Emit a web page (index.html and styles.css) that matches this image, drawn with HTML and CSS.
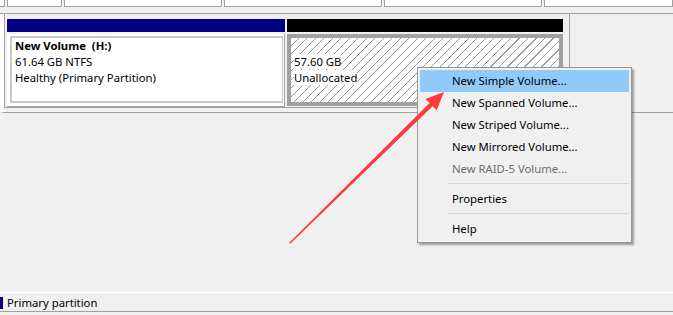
FILE: index.html
```html
<!DOCTYPE html>
<html>
<head>
<meta charset="utf-8">
<title>Disk Management</title>
<link rel="stylesheet" href="styles.css">
</head>
<body>
<div class="columns">
	<div class="col col-0"></div>
	<div class="col col-1"></div>
	<div class="col col-2"></div>
	<div class="col col-3"></div>
	<div class="col col-4"></div>
	<div class="col col-5"></div>
</div>

<div class="disk-row">
	<div class="disk">
		<div class="part part-primary">
			<div class="part-bar"></div>
			<div class="part-box">
				<div class="part-inner">
					<div class="part-name">New Volume&nbsp; (H:)</div>
					<div>61.64 GB NTFS</div>
					<div>Healthy (Primary Partition)</div>
				</div>
			</div>
		</div>
		<div class="part part-free">
			<div class="part-bar"></div>
			<div class="part-box">
				<div class="part-inner">
					<div>&nbsp;</div>
					<div><span class="label">57.60 GB</span></div>
					<div><span class="label">Unallocated</span></div>
				</div>
			</div>
		</div>
	</div>
</div>

<div class="empty"></div>

<div class="status">
	<span class="legend"></span>
	<span class="legend-text">Primary partition</span>
</div>

<div class="menu">
	<div class="item hot">New Simple Volume...</div>
	<div class="item">New Spanned Volume...</div>
	<div class="item">New Striped Volume...</div>
	<div class="item">New Mirrored Volume...</div>
	<div class="item off">New RAID-5 Volume...</div>
	<div class="sep"></div>
	<div class="item">Properties</div>
	<div class="sep"></div>
	<div class="item">Help</div>
</div>

<svg class="pointer" width="673" height="315" viewBox="0 0 673 315">
	<polygon fill="#ff3a3a" points="289,243 429.6,103 425.5,98.9 444,92 436.7,110.3 432.6,106.2 290.5,243.5"/>
</svg>
</body>
</html>
```

FILE: styles.css
```css
body {
	margin: 0;
	width: 673px;
	height: 315px;
	overflow: hidden;
	background: #f0f0f0;
	font-family: "Noto Sans", "Open Sans", sans-serif;
	font-size: 11.3px;
	color: #000;
	position: relative;
}
.columns {
	display: flex;
	height: 14px;
	border-bottom: 1px solid #a0a0a0;
	box-sizing: border-box;
}
.col {
	height: 6px;
	background: #fff;
	border-right: 1px solid #a0a0a0;
	border-bottom: 1px solid #a0a0a0;
	margin-right: 2px;
}
.col-0 { width: 4px; }
.col-1 { width: 53px; border-left: 1px solid #a0a0a0; }
.col-2 { width: 156px; border-left: 1px solid #a0a0a0; }
.col-3 { width: 156px; border-left: 1px solid #a0a0a0; }
.col-4 { width: 156px; border-left: 1px solid #a0a0a0; }
.col-5 { flex: 1; border-left: 1px solid #a0a0a0; margin-right: 0; }

.disk-row {
	height: 99px;
	border-bottom: 1px solid #a0a0a0;
	border-left: 4px solid #fff;
	box-sizing: border-box;
	background: #f0f0f0;
}
.disk {
	width: 566px;
	height: 94px;
	border-left: 1px solid #a0a0a0;
	border-right: 1px solid #a0a0a0;
	border-bottom: 1px solid #a0a0a0;
	background: #f0f0f0;
	box-sizing: border-box;
	display: flex;
	gap: 2px;
	padding: 5px 0 0 2px;
}
.part {
	display: flex;
	flex-direction: column;
	gap: 2px;
}
.part-bar {
	height: 13px;
}
.part-primary { width: 278px; }
.part-primary .part-bar { background: #000080; }
.part-primary .part-box {
	height: 74px;
	background: #fff;
	border-right: 1px solid #a0a0a0;
	border-bottom: 1px solid #a0a0a0;
	box-sizing: border-box;
	padding: 2px 1px 3px 3px;
}
.part-primary .part-inner {
	height: 100%;
	border: 2px solid #c8c8c8;
	border-right-width: 1px;
	box-sizing: border-box;
	padding: 0 0 0 3px;
}
.part-free { width: 276px; }
.part-free .part-bar { background: #000; }
.part-free .part-box {
	height: 72px;
	border: 4px solid #a0a0a0;
	box-sizing: border-box;
	background: #fff repeating-linear-gradient(135deg, #fff 0, #fff 5.2px, #9a9a9a 5.2px, #9a9a9a 6px);
}
.part-free .part-inner {
	padding: 0 0 0 3px;
}
.part-inner {
	line-height: 16px;
	white-space: nowrap;
}
.part-name {
	font-weight: bold;
}
.label {
	background: #fff;
}

.empty {
	height: 179px;
}
.status {
	height: 20px;
	border-top: 1px solid #fff;
	border-bottom: 1px solid #a0a0a0;
	box-sizing: border-box;
	display: flex;
	align-items: center;
	gap: 4px;
	padding-top: 1px;
}
.legend {
	width: 3px;
	height: 12px;
	background: #000080;
}
.legend-text {
	line-height: 16px;
}

.menu {
	position: absolute;
	left: 417px;
	top: 67px;
	width: 215px;
	height: 176px;
	box-sizing: border-box;
	background: #f0f0f0;
	border: 1px solid #979797;
	padding: 2px;
	box-shadow: 2px 2px 2px rgba(0, 0, 0, 0.35);
}
.item {
	height: 22px;
	line-height: 22px;
	padding-left: 32px;
	white-space: nowrap;
}
.item.hot {
	background: #91c9f7;
}
.item.off {
	color: #6d6d6d;
}
.sep {
	height: 1px;
	margin: 3px 0 4px 28px;
	background: #d7d7d7;
}
.pointer {
	position: absolute;
	left: 0;
	top: 0;
}
```
